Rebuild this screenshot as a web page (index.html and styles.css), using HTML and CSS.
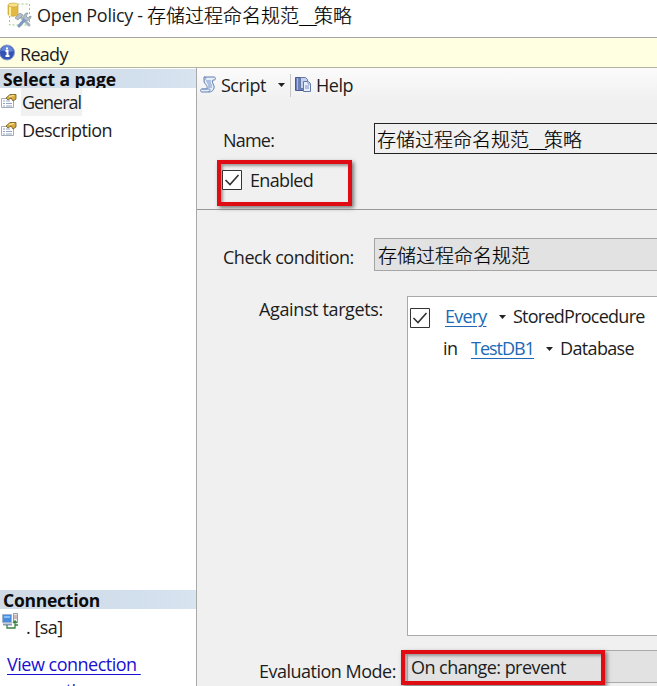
FILE: index.html
```html
<!DOCTYPE html>
<html lang="zh-CN">
<head>
<meta charset="utf-8">
<title>Open Policy</title>
<link rel="stylesheet" href="styles.css">
</head>
<body>
<div class="window">
  <header class="titlebar">
    <svg class="policy-icon" width="26" height="27" viewBox="0 0 26 27">
      <rect x="2.500" y="2" width="20" height="21" fill="#fcfdf8" stroke="#9bca7e" stroke-dasharray="2 2"/>
      <path d="M1 3v9c0 3 10 3 10 0V3" fill="#e2b941" stroke="#c39a2c" stroke-width=".6"/>
      <path d="M3 5v9" stroke="#fff0a0" stroke-width="2"/>
      <ellipse cx="6" cy="3" rx="5" ry="2" fill="#f9e28a" stroke="#c6a03a" stroke-width=".6"/>
      <path d="M13 14l9 9" stroke="#a3b0bd" stroke-width="3" stroke-linecap="round"/>
      <path d="M12 24l7-8" stroke="#7d98c2" stroke-width="3" stroke-linecap="round"/>
      <path d="M17 16c-1-3 1-5 4-5l-2 3 2 2 3-2c0 4-3 5-6 4" fill="#b7c2cc" stroke="#8393a2" stroke-width=".8"/>
      <path d="M8 16l5-5 3 2-5 5z" fill="#b4bdc5" stroke="#8795a1" stroke-width=".7"/>
    </svg>
    <span class="title-text">Open Policy - </span><span class="title-cjk cjk">存储过程命名规范<span class="bars">__</span>策略</span>
  </header>
  <div class="statusbar">
    <svg class="info-icon" width="15" height="17" viewBox="0 0 15 17">
      <circle cx="7" cy="8.500" r="7.500" fill="#3454b5" stroke="#91a0c9"/>
      <path d="M1 7c1-7 11-7 12 0-3 2-8-1-12 0" fill="#6585d8"/>
      <path d="M5.500 7h2v5M5.500 12h4M7 3.500v2" fill="none" stroke="#fff" stroke-width="2"/>
    </svg>
    <span class="ready">Ready</span>
  </div>
  <div class="body">
    <aside class="sidebar">
      <h2 class="side-head"><span class="t-select">Select a page</span></h2>
      <nav class="pages">
        <div class="page">
          <svg class="page-icon" width="16" height="15" viewBox="0 0 16 15"><path d="M.5 4.500h12v9H.5z" fill="#fff" stroke="#a3aab8"/><path d="M2 7h2M5 7h4M2 9.500h2M5 9.500h6M2 12h2M5 12h6" stroke="#93a4c3"/><path d="M5 4l4-3.500h6V5l-3 2-2-3-3 2z" fill="#d7ad42" stroke="#6f5520" stroke-width=".8"/><path d="M8 2.500l5-1" stroke="#fff0a8"/></svg>
          <span class="page-label selected"><span class="t-general">General</span></span>
        </div>
        <div class="page">
          <svg class="page-icon" width="16" height="15" viewBox="0 0 16 15"><path d="M.5 4.500h12v9H.5z" fill="#fff" stroke="#a3aab8"/><path d="M2 7h2M5 7h4M2 9.500h2M5 9.500h6M2 12h2M5 12h6" stroke="#93a4c3"/><path d="M5 4l4-3.500h6V5l-3 2-2-3-3 2z" fill="#d7ad42" stroke="#6f5520" stroke-width=".8"/><path d="M8 2.500l5-1" stroke="#fff0a8"/></svg>
          <span class="page-label"><span class="t-desc">Description</span></span>
        </div>
      </nav>
      <h2 class="side-head conn"><span class="t-conn">Connection</span></h2>
      <div class="server">
        <svg width="17" height="16" viewBox="0 0 17 16"><path d="M.5 1.500h9v8h-9z" fill="#4a8bdd" stroke="#a3b4ca"/><path d="M2 3h6v2H2z" fill="#82c1ff"/><path d="M1 11.500h9" stroke="#879bb8" stroke-width="2"/><path d="M11.500.5h4v9h-4z" fill="#e8ebf1" stroke="#8f9bac"/><path d="M12 3h3M12 5h3" stroke="#ac8584"/><path d="M5 12v3h8v-6M11 10l2-2 2 2M13 12h3" fill="none" stroke="#38833f" stroke-width="1.300"/></svg>
        <span class="t-sa">. [sa]</span>
      </div>
      <a class="view-link"><span class="t-view">View connection&nbsp;</span><br><span class="t-prop">properties</span></a>
    </aside>
    <main class="content">
      <div class="toolbar">
        <svg class="script-icon" width="17" height="17" viewBox="0 0 17 17"><path d="M4 1h10c2 0 2 3 0 3h-1c-2 3 2 5 1 8-1 4-4 4-6 4H2c-2 0-2-3 0-3h5c1-4-3-5-3-8z" fill="#e4edfa" stroke="#647eae"/><path d="M4 1c3 0 2 3 0 3M6 5h5M7 7h4M8 9h4M8 11h4M2 13h7c2 0 1 3-1 3" fill="none" stroke="#7894c3"/></svg>
        <span class="t-script">Script</span>
        <i class="caret"></i>
        <i class="divider"></i>
        <svg class="help-icon" width="17" height="17" viewBox="0 0 17 17"><path d="M.5 1.500h8v13h-8z" fill="#6c7fb7" stroke="#465990"/><path d="M2.500 2v12" stroke="#aab8de"/><path d="M5.500 1.500h5l2 2v9h-7z" fill="#c5d0e8" stroke="#6679a8"/><path d="M8.500 5.500h5l2 2v8h-7z" fill="#e8effc" stroke="#627aab"/><path d="M13 5v3h3M10 10h4M10 12h4" fill="none" stroke="#7d92bf"/></svg>
        <span class="t-help">Help</span>
      </div>
      <div class="row name-row">
        <span class="label t-name">Name:</span>
        <div class="field name-field cjk">存储过程命名规范<span class="bars">__</span>策略</div>
      </div>
      <div class="enabled-row">
        <div class="callout enabled-callout">
          <svg class="check" width="20" height="20" viewBox="0 0 20 20"><path d="M.5.5h19v19H.5z" fill="#fff" stroke="#333"/><path d="M3.500 10l4.500 4.500L16.500 5" fill="none" stroke="#333" stroke-width="1.600"/></svg>
          <span class="t-enabled">Enabled</span>
        </div>
      </div>
      <div class="row cond-row">
        <span class="label t-check">Check condition:</span>
        <div class="field cond-field cjk">存储过程命名规范</div>
      </div>
      <div class="targets-row">
        <span class="targets-label"><span class="t-against">Against targets:</span></span>
        <div class="targets">
          <div class="target-line">
            <svg class="check" width="20" height="20" viewBox="0 0 20 20"><path d="M.5.5h19v19H.5z" fill="#fff" stroke="#333"/><path d="M3.500 10l4.500 4.500L16.500 5" fill="none" stroke="#333" stroke-width="1.600"/></svg>
            <a class="link every"><span class="t-every">Every</span></a><i class="caret"></i><span class="t-stored">StoredProcedure</span>
          </div>
          <div class="target-line second">
            <span class="in">in</span><a class="link db"><span class="t-db">TestDB1</span></a><i class="caret"></i><span class="t-database">Database</span>
          </div>
        </div>
      </div>
      <div class="mode-row">
        <span class="mode-label"><span class="t-mode">Evaluation Mode:</span></span>
        <div class="mode-field"><div class="callout mode-callout"><span class="t-change">On change: prevent</span></div></div>
      </div>
    </main>
  </div>
</div>
</body>
</html>
```
FILE: styles.css
```css
* { box-sizing: border-box; }
body { margin: 0; overflow: hidden; font: 18px/24px "Open Sans", "Noto Sans CJK SC", sans-serif; letter-spacing: -.5px; color: #1c1c1c; background: #f0f0f0; }
.window { width: 657px; height: 686px; display: flex; flex-direction: column; overflow: hidden; }
svg, i { flex: none; display: block; }
span { white-space: nowrap; }
.cjk { font-family: "Noto Sans CJK SC", sans-serif; font-size: 19px; font-weight: 300; line-height: 28px; letter-spacing: 0; white-space: nowrap; color: #000; -webkit-text-stroke: .2px #000; }
.bars { display: inline-block; width: 15px; letter-spacing: -3px; }

.titlebar { flex: none; height: 38px; display: flex; align-items: flex-start; padding: 2px 0 0 7px; background: #fff; border-bottom: 1px solid #a6a6a6; }
.title-text { width: 110px; margin: 1px 0 0 4px; letter-spacing: -.3px; }
.title-cjk { margin-top: -1px; }
.statusbar { flex: none; height: 30px; display: flex; align-items: center; background: #ffffe1; border-bottom: 1px solid #b4b4a0; }
.ready { margin: 3px 0 0 5px; letter-spacing: -.7px; }
.body { flex: 1; min-height: 0; display: flex; }

.sidebar { width: 197px; flex: none; background: #fff; border-right: 1px solid #a9a9a9; display: flex; flex-direction: column; padding-top: 1px; }
.side-head { flex: none; margin: 0; width: 196px; height: 19px; padding-left: 3px; overflow: hidden; font-size: 17.500px; line-height: 21px; font-weight: 700; color: #0c0c0c; background: linear-gradient(90deg, #d0dbe6, #d2dfec 70%, #d8e4f0); }
.t-select { letter-spacing: -.05px; }
.t-conn { letter-spacing: -.25px; }
.pages { flex: none; height: 502px; }
.page { height: 28px; display: flex; align-items: flex-start; }
.page-icon { margin: 6px 4px 0 1px; }
.page-label { height: 28px; padding: 2px 1px 0; }
.selected { background: #f1f1f1; width: 61px; }
.t-general { letter-spacing: -1.05px; }
.t-desc { letter-spacing: -.55px; }
.server { flex: none; height: 43px; display: flex; align-items: flex-start; padding: 4px 0 0 2px; }
.server span { margin: 2px 0 0 7px; }
.view-link { flex: none; padding-left: 7px; color: #1a10d0; line-height: 26px; margin-top: -1px; }
.view-link span { text-decoration: underline; text-underline-offset: 3px; text-decoration-thickness: 1px; }
.t-prop { margin-left: 4px; }

.content { flex: 1; min-width: 0; display: flex; flex-direction: column; }
.toolbar { height: 34px; flex: none; display: flex; align-items: flex-start; padding: 5px 0 0 3px; background: linear-gradient(#fbfbfb, #f0f0f0); }
.script-icon { margin-top: 3px; }
.toolbar .t-script { width: 48px; margin: 0 9px 0 4px; }
.caret { width: 7px; height: 4px; background: #222; clip-path: polygon(0 0, 100% 0, 50% 100%); }
.toolbar .caret { margin-top: 10px; }
.divider { width: 1px; height: 23px; margin: 1px 4px 0 5px; background: #c6c6c6; }
.help-icon { margin: 3px 4px 0 0; }
.row { flex: none; display: flex; align-items: flex-start; padding-left: 26px; }
.label { width: 151px; flex: none; }
.t-name { letter-spacing: -.8px; }
.name-row { padding-top: 21px; height: 58px; }
.name-row .label { margin-top: 5px; }
.field { flex: 1; border: 1px solid #a5a5a5; border-right: 0; padding-left: 3px; }
.name-field { height: 31px; border-color: #222; padding-left: 2px; line-height: 29px; }
.cond-field { height: 33px; background: #e2e2e2; line-height: 31px; }
.enabled-row { height: 50px; flex: none; border-bottom: 1px solid #989898; padding-left: 20px; }
.callout { border: 4px solid #df0d13; box-shadow: 2px 2px 4px #777, inset 2px 2px 3px #999; }
.enabled-callout { position: relative; width: 135px; height: 46px; display: flex; padding: 6px 0 0 1px; }
.enabled-callout span { margin: -2px 0 0 8px; letter-spacing: -.65px; }
.cond-row { height: 86px; padding-top: 28px; }
.cond-row .label { margin-top: 7px; }
.targets-row { flex: none; display: flex; height: 340px; padding-left: 62px; }
.targets-label { width: 148px; padding-top: 1px; }
.t-against { letter-spacing: -.37px; }
.targets { flex: 1; background: #fff; border: 1px solid #a9a9a9; border-right: 0; padding: 7px 0 0 2px; }
.target-line { height: 32px; display: flex; align-items: flex-start; }
.target-line .check { margin-top: 4px; }
.link { color: #2069b5; text-decoration: underline; text-decoration-thickness: 1px; text-underline-offset: 3px; }
.every { width: 43px; margin: 0 11px 0 15px; letter-spacing: -.8px; }
.target-line .caret { margin: 11px 7px 0 0; }
.second { padding-left: 33px; }
.in { width: 28px; }
.t-stored { letter-spacing: -.75px; }
.db { width: 64px; margin-right: 11px; letter-spacing: -1px; }
.t-database { letter-spacing: -.65px; }
.mode-row { flex: none; display: flex; padding: 14px 0 0 62px; height: 50px; }
.mode-label { width: 142px; padding-top: 9px; }
.mode-field { flex: 1; height: 33px; margin-left: 6px; background: #e2e2e2; border: 1px solid #a9a9a9; border-right: 0; }
.mode-callout { width: 204px; height: 35px; margin: -1px 0 0 -7px; padding-left: 6px; }
.mode-callout span { display: block; margin-top: 1px; letter-spacing: -.55px; }
```
